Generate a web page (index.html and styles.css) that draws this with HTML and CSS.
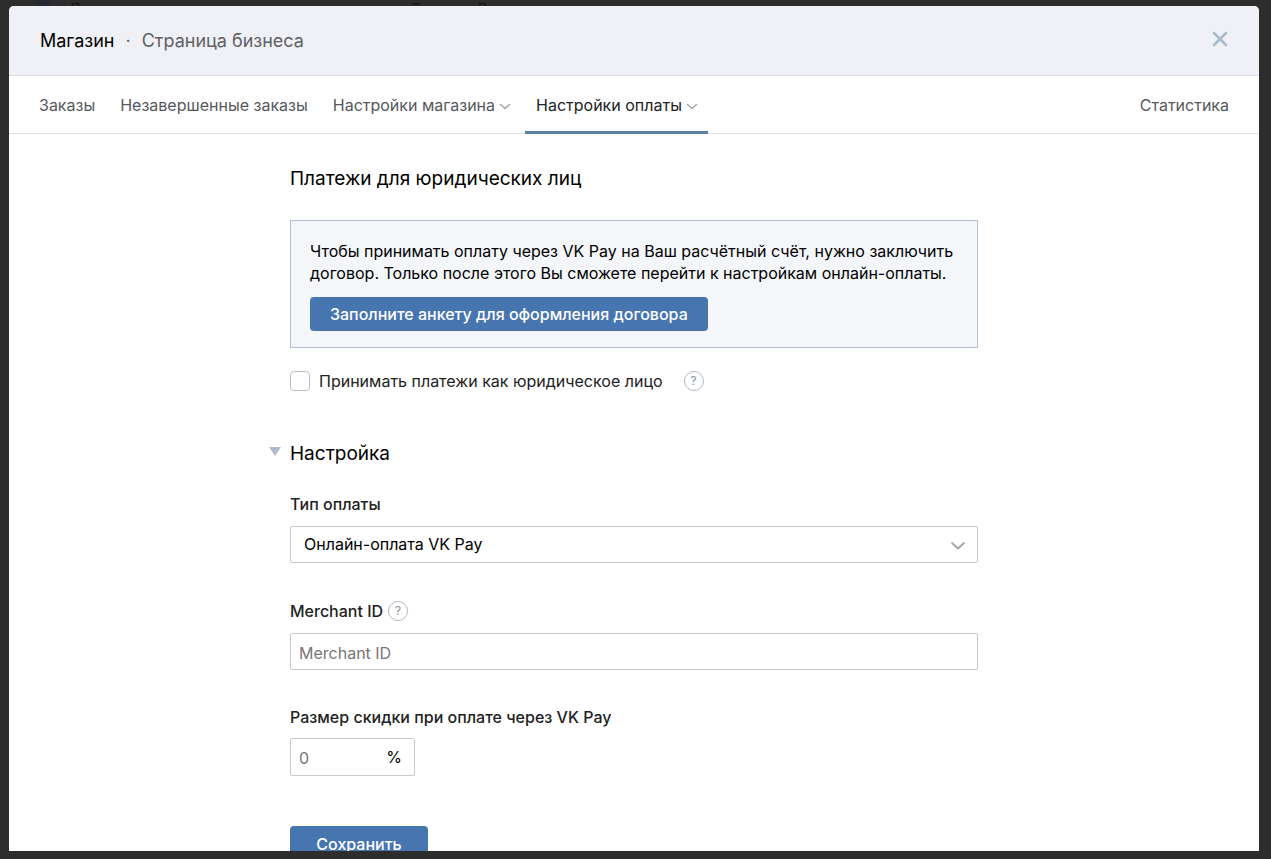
FILE: index.html
```html
<!DOCTYPE html>
<html lang="ru">
<head>
<meta charset="utf-8">
<meta name="viewport" content="width=device-width, initial-scale=1">
<title>Магазин</title>
<link rel="stylesheet" href="styles.css">
</head>
<body>
<div class="backdrop" aria-hidden="true">
  <span class="backdrop-nav"><i class="backdrop-icon"></i>Документы</span>
  <span class="backdrop-title">Татьяна В</span>
</div>
<main class="modal">
  <header class="modal-header">
    <h1 class="crumbs"><span>Магазин</span><span class="dot">·</span><a class="crumb-link" href="#">Страница бизнеса</a></h1>
    <button class="close" type="button" aria-label="Закрыть">
      <svg width="16" height="16" viewBox="0 0 16 16"><path d="M2 2l12 12M14 2L2 14" fill="none" stroke="#a9bac9" stroke-width="2.6" stroke-linecap="round"/></svg>
    </button>
  </header>
  <nav class="tabs">
    <a class="tab" href="#">Заказы</a>
    <a class="tab" href="#">Незавершенные заказы</a>
    <a class="tab" href="#">Настройки магазина<svg class="chev" width="12" height="8" viewBox="0 0 12 8"><path d="M1.500 2.500L6 6.500l4.500-4" fill="none" stroke="#a5a9ae" stroke-width="1.600" stroke-linecap="round" stroke-linejoin="round"/></svg></a>
    <a class="tab active" href="#" aria-current="page">Настройки оплаты<svg class="chev" width="12" height="8" viewBox="0 0 12 8"><path d="M1.500 2.500L6 6.500l4.500-4" fill="none" stroke="#a5a9ae" stroke-width="1.600" stroke-linecap="round" stroke-linejoin="round"/></svg></a>
    <a class="tab last" href="#">Статистика</a>
  </nav>
  <form class="content">
    <h2 class="heading">Платежи для юридических лиц</h2>
    <section class="notice">
      <p class="notice-text">Чтобы принимать оплату через VK Pay на Ваш расчётный счёт, нужно заключить договор. Только после этого Вы сможете перейти к настройкам онлайн-оплаты.</p>
      <button class="button" type="button">Заполните анкету для оформления договора</button>
    </section>
    <div class="check-row">
      <input class="check" type="checkbox" id="legal">
      <label for="legal">Принимать платежи как юридическое лицо</label>
      <button class="help" type="button" aria-label="Подсказка">?</button>
    </div>
    <h2 class="heading section"><svg class="triangle" width="12" height="9" viewBox="0 0 12 9"><path d="M0 0h12L6 9z" fill="#aebccd"/></svg>Настройка</h2>
    <div class="field">
      <div class="label-row"><label class="label" for="type">Тип оплаты</label></div>
      <div class="select-wrap">
        <select class="input select" id="type"><option>Онлайн-оплата VK Pay</option></select>
        <svg class="select-arrow" width="16" height="10" viewBox="0 0 16 10"><path d="M2 2l6 5.500L14 2" fill="none" stroke="#9ea3a9" stroke-width="1.700" stroke-linecap="round" stroke-linejoin="round"/></svg>
      </div>
    </div>
    <div class="field">
      <div class="label-row"><label class="label" for="merchant">Merchant ID</label><button class="help" type="button" aria-label="Подсказка">?</button></div>
      <input class="input" id="merchant" type="text" placeholder="Merchant ID">
    </div>
    <div class="field">
      <div class="label-row compact"><label class="label" for="discount">Размер скидки при оплате через VK Pay</label></div>
      <div class="discount"><input class="discount-input" id="discount" type="text" placeholder="0"><span>%</span></div>
    </div>
    <button class="button save" type="submit">Сохранить</button>
  </form>
</main>
</body>
</html>
```
FILE: styles.css
```css
* { box-sizing: border-box; }
body {
  margin: 0;
  height: 100vh;
  padding: 6px 12px 8px 9px;
  overflow: hidden;
  background: #2d2d2d;
  color: #000;
  font: 16px/22px Inter, "Noto Sans", sans-serif;
}
h1, h2, p { margin: 0; font-weight: 400; }
a { color: inherit; text-decoration: none; }
button, input, select { font: inherit; color: inherit; }
button { border: 0; padding: 0; background: none; cursor: pointer; }
svg { display: block; flex: none; }

.backdrop {
  position: absolute;
  top: 0;
  left: 0;
  right: 0;
  height: 6px;
  overflow: hidden;
  color: #171717;
  line-height: 18px;
}
.backdrop-nav { position: absolute; left: 36px; display: flex; gap: 18px; }
.backdrop-icon { width: 14px; height: 18px; background: #252a30; }
.backdrop-title { position: absolute; left: 411px; }

.modal {
  position: relative;
  height: 100%;
  overflow: hidden;
  border-radius: 5px 5px 0 0;
  background: #fff;
}
.modal-header {
  display: flex;
  align-items: center;
  justify-content: space-between;
  height: 70px;
  padding: 0 31px;
  border-bottom: 1px solid #dcdfe5;
  background: #f0f1f6;
}
.crumbs { display: flex; gap: 11px; font-size: 18px; line-height: 24px; }
.dot, .crumb-link { color: #5f6064; }
.close { padding-bottom: 3px; }

.tabs {
  display: flex;
  gap: 3px;
  height: 58px;
  padding: 0 19px;
  border-bottom: 1px solid #dfe1e5;
  color: #55585c;
}
.tab {
  display: flex;
  align-items: center;
  gap: 4px;
  height: 58px;
  padding: 2px 11px 0;
  border-bottom: 3px solid transparent;
}
.chev { margin-top: 2px; }
.active { padding-right: 10px; border-color: #5b7fa6; color: #222; }
.last { margin-left: auto; }

.content { max-width: 688px; margin: 0 auto; padding-top: 32px; }
.heading { font-size: 19px; line-height: 26px; }
.notice {
  margin-top: 28px;
  padding: 19px;
  padding-bottom: 16px;
  border: 1px solid #b3c1d2;
  background: #f4f6fa;
}
.notice-text { margin-bottom: 13px; }
.button {
  height: 34px;
  padding: 0 20px;
  border-radius: 4px;
  background: #4775af;
  color: #fff;
  font-weight: 500;
}
.check-row { display: flex; align-items: center; gap: 9px; margin-top: 22px; color: #222; }
.check {
  appearance: none;
  width: 20px;
  height: 20px;
  margin: 0;
  border: 1px solid #b9c2ca;
  border-radius: 4px;
  background: #fff;
}
.help {
  width: 20px;
  height: 20px;
  border: 1px solid #aeb8c5;
  border-radius: 50%;
  color: #858f9c;
  font-size: 12px;
  line-height: 18px;
}
.check-row .help { margin-left: 12px; }
.section { display: flex; gap: 9px; margin: 49px 0 26px -21px; }
.triangle { margin-top: 6px; }
.field { margin-bottom: 36px; }
.label-row { display: flex; align-items: center; gap: 5px; height: 22px; margin-bottom: 11px; }
.select-wrap + .label-row { margin-top: 1px; }
.compact { margin-bottom: 10px; }
.label { color: #222; font-weight: 500; }
.input, .discount {
  display: block;
  width: 100%;
  height: 37px;
  padding: 2px 8px 0;
  border: 1px solid #c3cad1;
  border-radius: 2px;
  background: #fff;
}
.select-wrap { position: relative; margin-bottom: 37px; }
.select { appearance: none; padding: 0 13px 2px; color: #000; }
.select-arrow { position: absolute; right: 12px; top: 15px; pointer-events: none; }
::placeholder { color: #767676; opacity: 1; }
.discount { display: flex; align-items: center; width: 125px; height: 38px; padding: 0 12px 0 8px; }
.discount-input { flex: 1; min-width: 0; padding: 2px 0 0; border: 0; background: none; }
.save { width: 138px; height: 36px; margin-top: 14px; }
```
